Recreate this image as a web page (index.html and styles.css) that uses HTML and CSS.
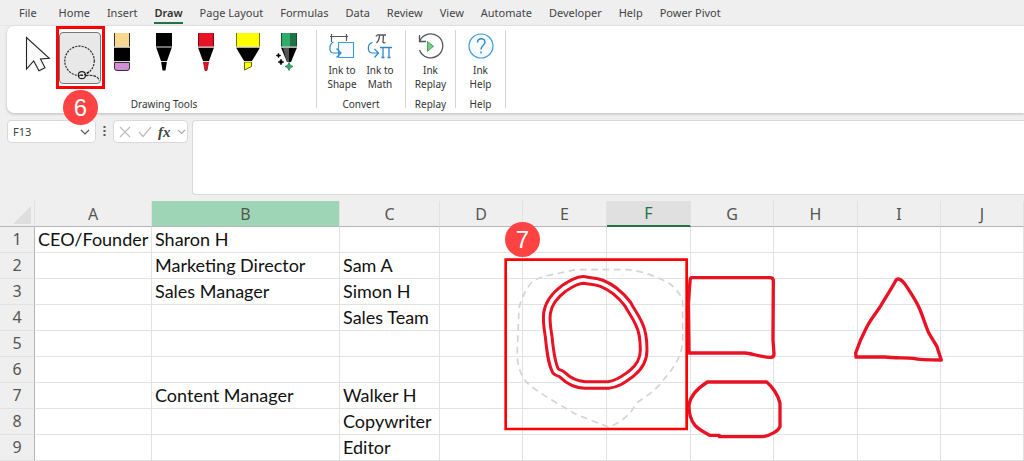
FILE: index.html
```html
<!DOCTYPE html>
<html lang="en">
<head>
<meta charset="utf-8">
<title>Workbook</title>
<link rel="stylesheet" href="styles.css">
</head>
<body>
<nav class="tabs">
  <a href="#">File</a><a href="#">Home</a><a href="#">Insert</a><a href="#" class="active">Draw</a><a href="#">Page Layout</a><a href="#">Formulas</a><a href="#">Data</a><a href="#">Review</a><a href="#">View</a><a href="#">Automate</a><a href="#">Developer</a><a href="#">Help</a><a href="#">Power Pivot</a>
</nav>

<section class="ribbon">
  <div class="group tools">
    <div class="items">
      <button class="tool" aria-label="Select"><svg viewBox="0 0 42 52"><path d="M9.5 5.5V37l7.200-8 5.300 9.700 6-3-4.500-8.700 8.800-.7z" fill="#fafafa" stroke="#222" stroke-width="1.100"/></svg></button>
      <div class="marked">
        <button class="tool selected" aria-label="Lasso Select"><svg viewBox="0 0 42 52"><g fill="none" stroke="#222"><circle cx="20.500" cy="29" r="15.500" stroke-width="1.200" stroke-dasharray="2.200 1.200"/><circle cx="23" cy="44" r="3.700" stroke-width="1.200"/><path d="M21 44h4M28 42l3-2M27 44.500c6-1 13 0 14 5" stroke-width="1.200" stroke-dasharray="3 1"/></g></svg></button>
        <span class="mark"></span>
        <span class="badge badge-six">6</span>
      </div>
      <button class="tool" aria-label="Eraser"><svg viewBox="0 0 42 52"><path d="M13 1h16v14H13z" fill="#f8d88e"/><path d="M13.500 1v14M28.500 1v14" stroke="#333"/><path d="M13 15.500h16V29H13z"/><path d="M13.500 30.500h15V36q0 2.500-2.500 2.500H16q-2.500 0-2.500-2.500z" fill="#d28fd8" stroke="#333"/><path d="M13 15h16M13 29.500h16" stroke="#ddd"/></svg></button>
      <button class="tool" aria-label="Black pen"><svg viewBox="0 0 42 52"><path d="M13 1h16v14H13z"/><path d="M13 15h16l-5 14h-6zM18 29h6l-1.500 9.500h-3z"/><path d="M13 15h16M18 29.500h6" stroke="#ddd"/></svg></button>
      <button class="tool" aria-label="Red pen"><svg viewBox="0 0 42 52"><path d="M13 1h16v14H13z" fill="#e81224"/><path d="M13.500 1v14M28.500 1v14" stroke="#6b0b14"/><path d="M13 15.500h16l-5 13.500h-6z"/><path d="M18.500 30h5L22 38.500h-2z" fill="#e81224" stroke="#8d1019" stroke-width=".8"/><path d="M13 15h16M18 29.500h6" stroke="#ddd"/></svg></button>
      <button class="tool" aria-label="Yellow highlighter"><svg viewBox="0 0 42 52"><path d="M9 1h24v14H9z" fill="#ff0"/><path d="M9.500 1v14M32.500 1v14" stroke="#77770a"/><path d="M9 15.500h24L25 29h-8z"/><path d="M17.500 30h7v4.500l-7 3.500z" fill="#ff0" stroke="#555500" stroke-width=".9"/><path d="M9 15h24M17 29.500h8" stroke="#ddd"/></svg></button>
      <button class="tool" aria-label="Action pen"><svg viewBox="0 0 42 52"><path d="M12 1h16v14H12z" fill="#217346"/><path d="M12 1h9v14h-9z" fill="#2fac66"/><path d="M12.500 1v14M27.500 1v14" stroke="#174d31"/><path d="M12 15.500h16L22 30h-4z"/><path d="M14 16h6v14h-2z" fill="#555"/><path d="M12 15h16" stroke="#ddd"/><path d="M20 30.500l1.300 2.700 2.700 1.300-2.700 1.300L20 38.500l-1.300-2.700L16 34.500l2.700-1.300z" fill="#2fac66" stroke="#217346" stroke-width=".7"/><path d="M9.500 21l.7 1.800 1.800.7-1.800.7-.7 1.800-.7-1.800-1.800-.7 1.800-.7zM12 27l1 2 2 1-2 1-1 2-1-2-2-1 2-1z" stroke="#000" stroke-width=".5"/></svg></button>
    </div>
    <span class="caption">Drawing Tools</span>
  </div>
  <div class="group convert">
    <div class="items">
      <button class="command"><svg viewBox="0 0 26 26"><path d="M2.500 1v8M1 3.500h18M17.500 1v7" fill="none" stroke="#555" stroke-width="1.200"/><path d="M9.500 9.500h15v15h-15z" fill="#f7fafd" stroke="#3a9bdc" stroke-width="1.100"/><path d="M4.500 9C0 11-.5 19 4 20h8M7.500 15.500L12 20l-4.500 4.500" fill="none" stroke="#2b88d0" stroke-width="1.200"/></svg><span>Ink to<br>Shape</span></button>
      <button class="command"><svg viewBox="0 0 26 26"><path d="M9 3.500Q10 1.500 12 2h7M12.500 2q0 5-3 8M16.500 2l-.5 7q.5 1.500 2.500.5" fill="none" stroke="#555" stroke-width="1.300"/><path d="M5.500 9.500C0 11 0 19 5 20h6M7.500 16l4 4-4 4.500" fill="none" stroke="#2b88d0" stroke-width="1.200"/><path d="M13 14.500h12M16 14.500v10M22 14.500v10M14.500 24.500h3M20.500 24.500h3" fill="none" stroke="#2b88d0" stroke-width="1.300"/></svg><span>Ink to<br>Math</span></button>
    </div>
    <span class="caption">Convert</span>
  </div>
  <div class="group">
    <div class="items"><button class="command"><svg viewBox="0 0 26 26"><path d="M1.500 2v6.500H8M1.800 8A12 12 0 1 1 1.500 17" fill="none" stroke="#555" stroke-width="1.300"/><path d="M9.500 8.500l6 4.800-6 5z" fill="#7cc98e" stroke="#43a35c"/></svg><span>Ink<br>Replay</span></button></div>
    <span class="caption">Replay</span>
  </div>
  <div class="group">
    <div class="items"><button class="command"><svg viewBox="0 0 26 26"><circle cx="13" cy="13" r="12" fill="#f8fbfe" stroke="#3a9bdc" stroke-width="1.200"/><path d="M9.500 9.500c0-5 7.500-5 7.500-.3 0 3-4 3.300-4 7.300M13 18.500v2" fill="none" stroke="#2b88d0" stroke-width="1.400"/></svg><span>Ink<br>Help</span></button></div>
    <span class="caption">Help</span>
  </div>
</section>

<section class="formula-row">
  <div class="name-box"><input type="text" value="F13" aria-label="Name box"><button aria-label="Open name list"><svg width="10" height="6" viewBox="0 0 10 6"><path d="M1 1l4 4 4-4" fill="none" stroke="#555" stroke-width="1.200"/></svg></button></div>
  <svg class="grip" viewBox="0 0 3 10"><path d="M.5 0h2v2h-2zM.5 4h2v2h-2zM.5 8h2v2h-2z" fill="#555"/></svg>
  <div class="entry">
    <button aria-label="Cancel"><svg width="12" height="12" viewBox="0 0 12 12"><path d="M1 1l10 10M11 1L1 11" stroke="#bbb" stroke-width="1.100"/></svg></button>
    <button aria-label="Enter"><svg width="14" height="12" viewBox="0 0 14 12"><path d="M1 6l4 4.500L13 1" fill="none" stroke="#bbb" stroke-width="1.200"/></svg></button>
    <button class="fx">fx</button>
    <button aria-label="More functions"><svg width="9" height="6" viewBox="0 0 9 6"><path d="M1 1l3.500 3.500L8 1" fill="none" stroke="#aaa" stroke-width="1.200"/></svg></button>
  </div>
  <textarea class="formula" aria-label="Formula bar"></textarea>
</section>

<main class="sheet">
  <table>
    <colgroup><col class="w-head"><col class="w-a"><col class="w-b"><col class="w-c"><col class="w-odd"><col class="w-std"><col class="w-std"><col class="w-odd"><col class="w-std"><col class="w-odd"><col></colgroup>
    <thead><tr><th class="corner"><svg width="18" height="18" viewBox="0 0 18 18"><path d="M18 0v18H0z" fill="#dedede"/></svg></th><th>A</th><th class="picked">B</th><th>C</th><th>D</th><th>E</th><th class="current">F</th><th>G</th><th>H</th><th>I</th><th>J</th></tr></thead>
    <tbody>
      <tr><th>1</th><td>CEO/Founder</td><td>Sharon H</td><td></td><td></td><td></td><td></td><td></td><td></td><td></td><td></td></tr>
      <tr><th>2</th><td></td><td>Marketing Director</td><td>Sam A</td><td></td><td></td><td></td><td></td><td></td><td></td><td></td></tr>
      <tr><th>3</th><td></td><td>Sales Manager</td><td>Simon H</td><td></td><td></td><td></td><td></td><td></td><td></td><td></td></tr>
      <tr><th>4</th><td></td><td></td><td>Sales Team</td><td></td><td></td><td></td><td></td><td></td><td></td><td></td></tr>
      <tr><th>5</th><td></td><td></td><td></td><td></td><td></td><td></td><td></td><td></td><td></td><td></td></tr>
      <tr><th>6</th><td></td><td></td><td></td><td></td><td></td><td></td><td></td><td></td><td></td><td></td></tr>
      <tr><th>7</th><td></td><td>Content Manager</td><td>Walker H</td><td></td><td></td><td></td><td></td><td></td><td></td><td></td></tr>
      <tr><th>8</th><td></td><td></td><td>Copywriter</td><td></td><td></td><td></td><td></td><td></td><td></td><td></td></tr>
      <tr><th>9</th><td></td><td></td><td>Editor</td><td></td><td></td><td></td><td></td><td></td><td></td><td></td></tr>
    </tbody>
  </table>
  <svg class="ink" viewBox="0 3 1380 780" fill="none" stroke-linejoin="round" stroke-linecap="round">
    <path d="M355 681C335 673 290 656 255 641C215 618 150 580 118 555C95 535 80 500 82 450L87 325C95 290 110 265 126 245C150 228 210 220 255 209H415C460 213 520 238 540 252C560 268 578 290 578 310V425C575 470 550 505 520 540C495 575 465 590 445 605C425 625 430 635 405 653C385 670 370 676 355 681Z" stroke="#d4d4d4" stroke-width="5" stroke-dasharray="20 14" stroke-linecap="butt"/>
    <path d="M284 240C262 238 240 253 222 265C195 285 175 310 171 340C168 365 172 385 176 410C180 450 184 490 197 513C205 522 208 515 218 525C235 542 255 553 285 555H355C385 552 405 534 425 520C450 500 461 480 461 450C461 420 456 390 447 372C435 345 425 335 413 312C390 282 365 262 335 250C315 242 300 244 284 240Z" stroke="#e81224" stroke-width="29"/>
    <path d="M284 240C262 238 240 253 222 265C195 285 175 310 171 340C168 365 172 385 176 410C180 450 184 490 197 513C205 522 208 515 218 525C235 542 255 553 285 555H355C385 552 405 534 425 520C450 500 461 480 461 450C461 420 456 390 447 372C435 345 425 335 413 312C390 282 365 262 335 250C315 242 300 244 284 240Z" stroke="#fff" stroke-width="11"/>
    <g stroke="#e81224" stroke-width="10">
      <path d="M600 245Q600 233 605 233H840Q850 233 850 243L849 420L852 462Q852 472 842 472C810 471 785 460 765 459H597L595 310L600 245"/>
      <path d="M688 706H660C645 698 625 688 615 676C602 660 596 645 597 615C600 590 615 570 652 546H830C845 558 865 585 870 610V680C865 693 840 707 820 710H688"/>
      <path d="M1224 237Q1219 237 1215 246C1205 265 1185 295 1173 316C1160 337 1140 360 1130 382C1120 401 1105 435 1097 459L1098 471H1185C1210 474 1250 473 1270 475C1290 480 1315 480 1354 480C1350 468 1345 455 1341 440C1330 420 1322 410 1315 396C1305 372 1297 345 1289 327C1280 305 1265 283 1250 260C1240 244 1232 237 1224 237Z"/>
    </g>
    <path d="M47 179H590V687H47Z" stroke="#f00" stroke-width="8" stroke-linejoin="miter"/>
  </svg>
  <span class="badge badge-seven">7</span>
</main>
</body>
</html>
```
FILE: styles.css
```css
* { box-sizing: border-box; }

body {
  margin: 0;
  overflow: hidden;
  background: #efefef;
  color: #333;
  font-family: "Noto Sans", "Open Sans", sans-serif;
  font-size: 11px;
}

button {
  margin: 0;
  padding: 0;
  border: 0;
  background: none;
  color: inherit;
  font: inherit;
}

svg { display: block; }

/* Ribbon tabs */
.tabs {
  display: flex;
  height: 26px;
  gap: 17px;
  padding-left: 19px;
  border-bottom: 1px solid #e6e6e6;
}
.tabs a {
  height: 24px;
  padding-top: 5px;
  color: #444;
  line-height: 16px;
  text-decoration: none;
  white-space: nowrap;
}
.tabs a:first-child { margin-right: 5px; }
.tabs .active {
  border-bottom: 2px solid #217346;
  color: #333;
  font-weight: 600;
}

/* Ribbon */
.ribbon {
  display: flex;
  height: 87px;
  margin-left: 7px;
  border-radius: 7px 0 0 7px;
  background: #fff;
  box-shadow: 0 1px 3px #bbb;
  font-size: 10px;
}
.group {
  display: flex;
  flex-direction: column;
  align-items: center;
  justify-content: space-between;
  width: 50px;
  margin: 4px 0 5px;
  border-right: 1px solid #d4d4d4;
}
.tools { width: 310px; padding: 0 5px 0 10px; }
.convert { width: 89px; }
.items { display: flex; align-items: flex-start; height: 66px; padding-top: 2px; }
.caption { line-height: 8px; }
.tool { display: block; width: 42px; height: 52px; }
.tool svg { width: 42px; height: 52px; }
.selected {
  border: 1px solid #777;
  border-radius: 4px;
  background: #e8e8e8;
}
.selected svg { width: 40px; height: 50px; }
.marked { position: relative; }
.mark {
  position: absolute;
  inset: -6px -4px -5px -3px;
  border: 3px solid #f00;
}
.command {
  display: flex;
  flex-direction: column;
  align-items: center;
  width: 38px;
  gap: 4px;
  padding-top: 1px;
  line-height: 14px;
}
.command svg { width: 26px; height: 26px; }

.badge {
  position: absolute;
  z-index: 2;
  width: 35px;
  height: 35px;
  border-radius: 50%;
  background: #ff4242;
  color: #fff;
  font: 24px/35px "Liberation Sans", Arial, sans-serif;
  text-align: center;
}
.badge-six { left: 4px; top: 58px; }
.badge-seven { left: 505px; top: 21px; }

/* Formula row */
.formula-row {
  display: flex;
  align-items: flex-start;
  padding: 7px 0 6px 7px;
}
.name-box, .entry, .formula {
  border: 1px solid #d9d9d9;
  border-radius: 4px;
  background: #fff;
}
.name-box { display: flex; width: 89px; height: 23px; padding: 0 5px; }
.name-box input {
  flex: 1;
  min-width: 0;
  padding: 0;
  border: 0;
  outline: 0;
  background: none;
  color: #444;
  font: inherit;
}
.grip { width: 3px; height: 10px; margin: 6px 7px 0; }
.entry {
  display: flex;
  align-items: center;
  justify-content: space-between;
  width: 75px;
  height: 23px;
  padding: 0 1px 0 5px;
}
.fx { color: #444; font: italic 700 15px/20px "Liberation Serif", serif; }
.formula {
  flex: 1;
  height: 75px;
  margin-left: 4px;
  border-right: 0;
  border-radius: 4px 0 0 4px;
  outline: 0;
  resize: none;
}

/* Worksheet */
.sheet { position: relative; }
.sheet table {
  width: 100%;
  border-collapse: separate;
  border-spacing: 0;
  table-layout: fixed;
}
.w-head { width: 35px; }
.w-a { width: 117px; }
.w-b { width: 188px; }
.w-c { width: 100px; }
.w-odd { width: 83px; }
.w-std { width: 84px; }
.sheet th, .sheet td {
  height: 26px;
  padding: 0 3px 2px;
  border-right: 1px solid #e2e2e2;
  border-bottom: 1px solid #e2e2e2;
  line-height: 22px;
  white-space: nowrap;
}
.sheet td {
  background: #fff;
  color: #111;
  font-family: Lato, sans-serif;
  font-size: 18px;
  text-align: left;
}
.sheet th {
  background: #efefef;
  color: #555;
  font-size: 16px;
  font-weight: 400;
  text-align: center;
}
.sheet thead th {
  padding-bottom: 0;
  border-bottom-color: #b5b5b5;
}
.sheet tbody th { border-right-color: #b5b5b5; }
.sheet thead .corner { padding: 4px 3px 2px 13px; }
.sheet .picked { background: #9fd5b7; }
.sheet thead .current {
  border-bottom: 2px solid #217346;
  background: #e0e0e0;
  color: #217346;
}
.ink {
  position: absolute;
  left: 490px;
  top: 0;
  width: 460px;
  height: 260px;
}
```
